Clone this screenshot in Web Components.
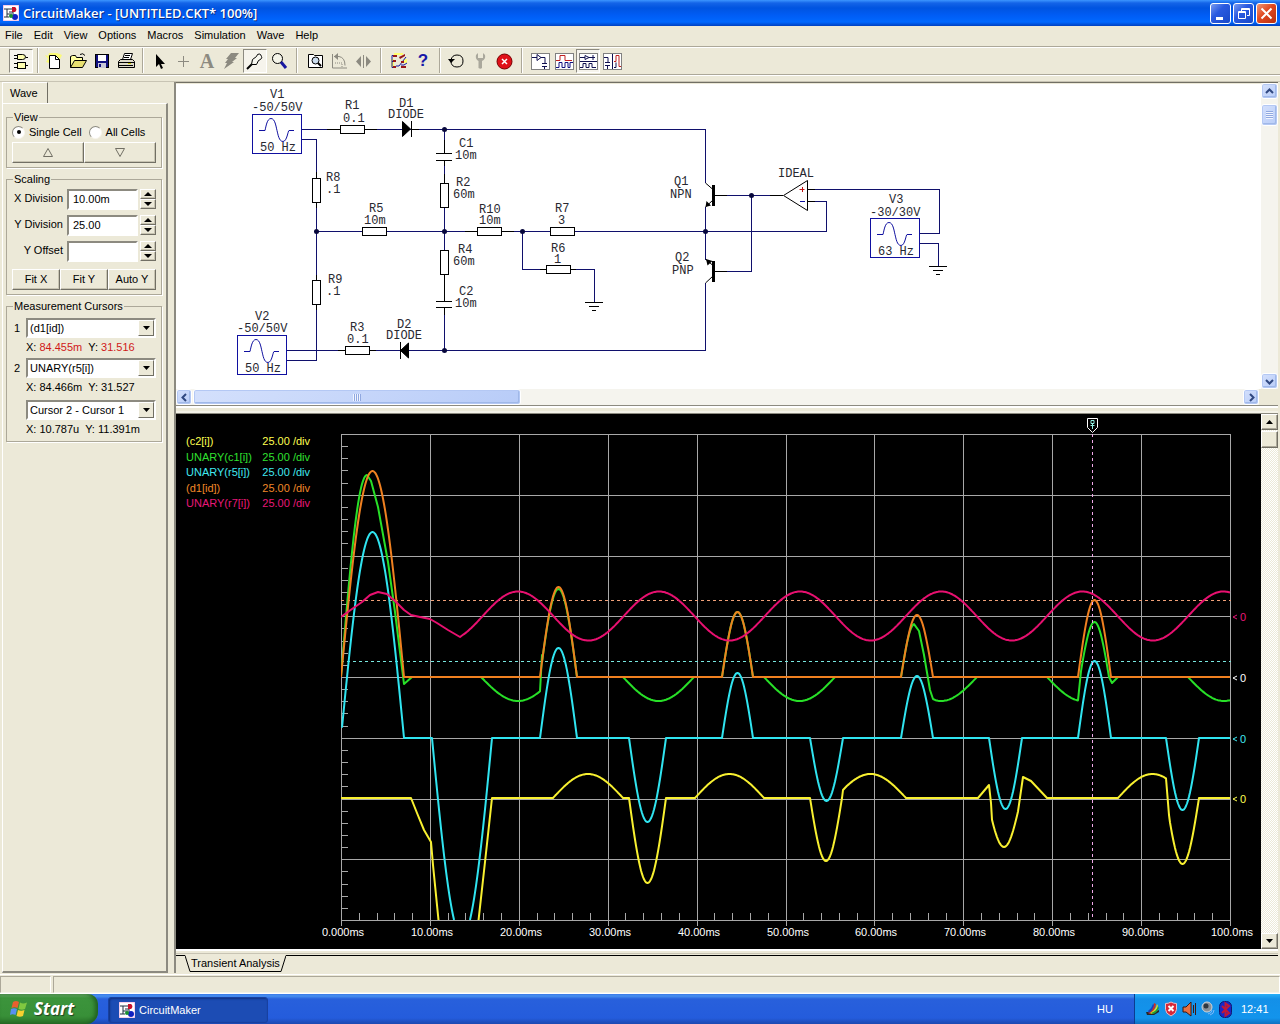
<!DOCTYPE html>
<html lang="en">
<head>
<meta charset="utf-8">
<title>CircuitMaker - [UNTITLED.CKT* 100%]</title>
<style>
html,body{margin:0;height:100%}
body{font:11px/13px "Liberation Sans",Arial,sans-serif;color:#000;background:#ece9d8;overflow:hidden}
</style>
</head>
<body>
<cm-app></cm-app>
<script>
const define=(name,html,after)=>customElements.define(name,class extends HTMLElement{
  constructor(){super();this.attachShadow({mode:'open'});}
  connectedCallback(){
    this.shadowRoot.innerHTML='<style>*{box-sizing:border-box}button,input,select{font:inherit;color:inherit;margin:0}</style>'+(typeof html==='function'?html(this):html);
    if(after)after(this);
  }
});
const LOGO='<rect width="16" height="16" fill="#fff" stroke="#e8a0d8"/><path d="M1 4h8M4 4v8M1 12h5M6 7h4v4M4 9h5" stroke="#203040" fill="none"/><path d="M9 2h3a3 3 0 0 1 0 5H9z" fill="#c8102c"/><circle cx="12" cy="12" r="3" fill="#1020c0"/><circle cx="8" cy="11" r="2" fill="#189030"/>';

/* ---- icons, drawn on a 20 x 20 grid ---- */
const ICONS={
gates:'<g fill="#ffffb0" stroke="#000"><path d="M6.500 3.500h5q3 0 3 2.500t-3 2.500h-5z"/><rect x="6.500" y="11.500" width="8" height="6"/></g><path d="M3 4.500h3M3 7.500h3M15 6.500h2M3 12.500h3M3 16.500h3M15 14.500h2" stroke="#000"/>',
new:'<path d="M5 2l-1 3-3-1 3 4-2 3 3 1v5h11V8l2-4-5-2z" fill="#ffff60" opacity=".8"/><path d="M5.500 4.500h6l4 4v9h-10z" fill="#fff" stroke="#000"/><path d="M11.500 4.500v4h4" fill="none" stroke="#000"/>',
open:'<path d="M2.500 16.500v-11l2-1h3l1 2h6v3" fill="#ffffa0" stroke="#000"/><path d="M2.500 16.500l4-7h12l-4 7z" fill="#e8e070" stroke="#000"/><path d="M12 3.500q3-2 5 1" stroke="#000" fill="none"/>',
save:'<rect x="3.500" y="3.500" width="13" height="13" fill="#101080" stroke="#000"/><rect x="6" y="4" width="8" height="6" fill="#fff"/><rect x="6" y="12" width="8" height="5" fill="#c8c8d8"/><rect x="7" y="13" width="2" height="3" fill="#101080"/>',
print:'<path d="M6.500 8.500l2-6h8l-2 6z" fill="#fff" stroke="#000"/><path d="M9 4.500h5M8 6.500h5" stroke="#000"/><path d="M2.500 10.500l2-2h12l2 2v6h-16z" fill="#ddd9c8" stroke="#000"/><path d="M2 11.500h16M3 14.500h14" stroke="#000"/><rect x="12" y="12" width="3" height="1" fill="#cc0"/>',
arrow:'<path d="M7 3v13l3-3 2 5 2-1-2-4h4z"/>',
plus:'<path d="M10.500 5v11M5 10.500h11" stroke="#8c8a80"/>',
flash:'<path d="M10 2h8l-4 5h2l-5 4h2L3 18l3-6H4l3-4H5z" fill="#8c8a80"/>',
probe:'<path d="M2 18l5-5" stroke="#000" stroke-width="2"/><path d="M6.500 13.500l1-5 4-3 1-2q2-1 3 0l1 2q1 1-1 3l-2 1-2 4z" fill="#f8f8f0" stroke="#000"/>',
zoom:'<circle cx="8.500" cy="7.500" r="5" fill="#f4f4e8" stroke="#000"/><path d="M12 11l5 6" stroke="#1818a0" stroke-width="3"/>',
fit:'<path d="M3.500 3.500h5l1 1h8v12h-14z" fill="#fff" stroke="#000"/><circle cx="10.500" cy="9.500" r="3.500" fill="#cde" stroke="#000"/><path d="M13 12l3 3" stroke="#000" stroke-width="2"/>',
rotate:'<path d="M3.500 3v14H18" fill="none" stroke="#8c8a80"/><path d="M6 12h7v4" fill="none" stroke="#8c8a80" stroke-dasharray="1 1"/><path d="M5 5.500h5q6 1 6 9" fill="none" stroke="#8c8a80"/><path d="M9 2v7L5 5.500z" fill="#8c8a80"/>',
mirror:'<path d="M8 5v11L3 10.500zM13 5v11l5-5.500z" fill="#8c8a80"/><path d="M10.500 4v13" stroke="#8c8a80"/>',
cut:'<path d="M5 2h9v2H5zM2 8h3v8H2zM15 8h3v4h-3z" fill="#ffff70"/><path d="M5 4.500h-2v12M3 10.500h4M3 16.500h4M7 15h3l7-9M12 14h3l3-2" stroke="#1818a0" fill="none"/><path d="M4 4h4v2H4zM4 9h3v2H4zM4 15h3v2H4zM10 6l6-3v2l-5 3zM12 10h3v2h-3zM12 15h5v2h-5z" fill="#981818"/>',
undo:'<path d="M5 10q0 6 6 6t6-6-6-6q-5 0-6 5" fill="none" stroke="#000"/><path d="M2 8h7l-4 4z"/>',
wrench:'<path d="M8.500 10v7q2 1.500 3.500 0v-7q4-2 3-6l-2-2v5h-5v-5l-2 2q-1 4 2.500 6z" fill="#aaa89c"/>',
stop:'<circle cx="10.500" cy="10.500" r="7.500" fill="#e01018" stroke="#700"/><path d="M8 8l5 5M13 8l-5 5" stroke="#fff" stroke-width="1.500"/>',
w1:'<rect x="1.500" y="2.500" width="18" height="16" fill="#fff" stroke="#808080"/><path d="M2 6.500h5v-3l4 3-4 3v-3M11 6.500h4v6M12 12.500h5M12 15.500h5M14.500 15v3" fill="none" stroke="#101050"/>',
w2:'<rect x="1.500" y="2.500" width="18" height="16" fill="#fff" stroke="#808080"/><path d="M2 9.500h4v-5h5v5h7" fill="none" stroke="#c02020"/><path d="M2 16.500h3v-5h3v5h3v-5h3v5h2v-5h3" fill="none" stroke="#101080"/>',
w3:'<rect x="1.500" y="2.500" width="18" height="16" fill="#fff" stroke="#808080"/><path d="M2 6.500h5v-2l4 2-4 2v-2M11 6.500h6M2 10.500h17M15 4v5M2 16.500h3v-4h3v4h3v-4h3v4h4" fill="none" stroke="#101050"/>',
w4:'<rect x="1.500" y="2.500" width="18" height="16" fill="#fff" stroke="#808080"/><path d="M10.500 3v15M2 6.500h4v5M3 11.500h5M3 14.500h5M5.500 14v4M12 16.500h2v-5" fill="none" stroke="#101050"/><path d="M12 10.500h2v-6h3v11h2" fill="none" stroke="#c02020"/>'
};

define('cm-tool',el=>{
  const n=el.getAttribute('icon');
  const inner=n==='text'?'<span>A</span>':n==='help'?'<b>?</b>':`<svg width="20" height="20" viewBox="0 0 20 20">${ICONS[n]}</svg>`;
  return `<style>:host{display:block;width:24px;height:24px}
button{width:100%;height:100%;padding:1px;border:1px solid transparent;background:none;display:flex;align-items:center;justify-content:center}
:host([pressed]) button{border-color:#8c8a80 #fff #fff #8c8a80;background:#f6f4ec}
span{font:bold 20px/20px "Liberation Serif",serif;color:#8c8a80}b{font:bold 17px/20px "Liberation Sans",sans-serif;color:#1818a8}</style>
<button type="button" aria-label="${n}">${inner}</button>`;});

define('cm-title-bar',`<style>:host{display:flex;align-items:center;height:26px;padding:0 3px;gap:4px;color:#fff;background:linear-gradient(#3c96ff 0,#1464e8 3px,#0054e0 8px,#005cf4 15px,#0068ff 22px,#0040c0 26px)}
h1{flex:1;margin:0;font:600 13px/18px "Open Sans","Noto Sans",sans-serif;text-shadow:1px 1px 0 #0a2a80}
div{display:flex;gap:2px}
button{width:21px;height:21px;padding:0;border:1px solid #fff;border-radius:3px;background:linear-gradient(135deg,#7a9cf0,#2a5ae0 40%,#1848c8);display:grid;place-items:center}
.x{background:linear-gradient(135deg,#f09878,#e04820 45%,#b83010)}svg{display:block}</style>
<svg width="16" height="16" viewBox="0 0 16 16">${LOGO}</svg><h1>CircuitMaker - [UNTITLED.CKT* 100%]</h1>
<div><button type="button" aria-label="Minimize"><svg width="15" height="15"><path d="M3 11h7v3H3z" fill="#fff"/></svg></button>
<button type="button" aria-label="Restore"><svg width="15" height="15" fill="none" stroke="#fff"><path d="M5.500 5V2.500h8v7H11M5 3.500h9M2.500 5.500h7v7h-7zM2 6.500h8"/></svg></button>
<button type="button" class="x" aria-label="Close"><svg width="15" height="15" stroke="#fff" stroke-width="2"><path d="M2.500 2.500l10 10M12.500 2.500l-10 10"/></svg></button></div>`);

define('cm-menu-bar',`<style>:host{display:flex;height:20px;gap:11px;padding:0 5px;align-items:flex-start}button{border:0;background:none;padding:0;line-height:18px}</style>
${['File','Edit','View','Options','Macros','Simulation','Wave','Help'].map(t=>`<button type="button">${t}</button>`).join('')}`);

define('cm-toolbar',()=>{
  const groups=[['*gates'],['new','open','save','print'],['arrow','plus','text','flash','*probe','zoom'],['fit','rotate','mirror'],['cut','help'],['undo','wrench','stop'],['w1','w2','*w3','w4']];
  const sep=['','s','s','l','l','s','l'];
  return `<style>:host{display:flex;height:29px;align-items:center;padding:0 9px;border-top:1px solid #aca899;border-bottom:1px solid #aca899;box-shadow:inset 0 1px #fff,0 1px #fff}
i{height:25px;width:2px;border-left:1px solid #aca899;border-right:1px solid #fff}.s{margin:0 3px 0 4px}.l{margin:0 5px}</style>`+
  groups.map((g,k)=>(sep[k]?`<i class="${sep[k]}"></i>`:'')+g.map(n=>n[0]==='*'?`<cm-tool icon="${n.slice(1)}" pressed></cm-tool>`:`<cm-tool icon="${n}"></cm-tool>`).join('')).join('');});

define('cm-group',el=>`<style>:host{display:block}fieldset{margin:0;min-width:0;padding:0 5px 4px;border:1px solid #aca899;box-shadow:1px 1px 0 #fff}
legend{margin:0 0 0 1px;padding:0 1px;line-height:13px}</style><fieldset><legend>${el.getAttribute('label')}</legend><slot></slot></fieldset>`);

define('cm-sidebar',()=>{
  const spin=(id,label,val)=>`<div class="row"><label for="${id}">${label}</label><input type="text" id="${id}" value="${val}"><span class="spin"><button type="button" aria-label="${label} up"><svg width="8" height="4"><path d="M0 4l4-4 4 4z"/></svg></button><button type="button" aria-label="${label} down"><svg width="8" height="4"><path d="M0 0h8l-4 4z"/></svg></button></span></div>`;
  const sel=(id,n,val)=>`<div class="pick"><label for="${id}">${n}</label><span class="box"><select id="${id}" aria-label="${val}"><option>${val}</option></select><i><svg width="7" height="4"><path d="M0 0h7l-3.500 4z"/></svg></i></span></div>`;
  return `<style>:host{display:flex;flex-direction:column;width:168px;padding-left:2px}
button{padding:0;border:1px solid;border-color:#fff #716f64 #716f64 #fff;background:#ece9d8;box-shadow:inset -1px -1px #c8c4b2;display:grid;place-items:center}
.tab{align-self:flex-start;width:46px;height:21px;padding:0 0 0 7px;border:1px solid #fff;border-right:1px solid #716f64;border-bottom:0;line-height:19px;background:none;box-shadow:none;display:block;text-align:left}
.panel{flex:1;display:flex;flex-direction:column;gap:5px;padding:7px 4px 0 3px;border:1px solid #fff;border-right:2px solid #8c8a80;border-bottom:2px solid #8c8a80}
.radios{display:flex;gap:7px;height:18px;align-items:center;padding-bottom:2px}.radios label{display:flex;align-items:center;gap:4px}
input[type=radio]{appearance:none;width:13px;height:13px;border:1px solid;border-color:#8c8a80 #f8f6ee #f8f6ee #8c8a80;border-radius:50%;background:#fff;display:grid;place-items:center}
input[type=radio]:checked::after{content:"";width:4px;height:4px;border-radius:50%;background:#000}
.btns{display:flex}.btns button{flex:1;height:21px}.fits{margin-top:5px}
.row{display:flex;align-items:center;height:26px;gap:2px}.row label{flex:1;text-align:right;white-space:nowrap;padding-right:2px;padding-bottom:2px}
.row input{width:71px;height:21px;padding:0 4px;border:2px solid;border-color:#8c8a80 #fff #fff #8c8a80;background:#fff;border-radius:0}
.spin{display:flex;flex-direction:column;width:16px}.spin button{height:10px}
.picks{padding-top:5px}
.pick{display:flex;height:20px;gap:6px;align-items:center}.pick label{width:8px;text-align:right}.box{flex:1;display:grid}
select{grid-area:1/1;appearance:none;width:100%;height:20px;padding:0 18px 0 2px;border:2px solid;border-color:#8c8a80 #fff #fff #8c8a80;border-radius:0;background:#fff}
.box i{grid-area:1/1;justify-self:end;align-self:center;margin-right:2px;width:16px;height:16px;background:#ece9d8;border:1px solid;border-color:#fff #716f64 #716f64 #fff;display:grid;place-items:center;pointer-events:none}
.val{height:20px;line-height:19px;padding-left:14px;white-space:pre}.val b{font-weight:400;color:#d01818}.gap{height:22px}.last{height:17px}</style>
<button type="button" class="tab">Wave</button>
<div class="panel">
<cm-group label="View"><div class="radios"><label><input type="radio" name="v" checked>Single Cell</label><label><input type="radio" name="v">All Cells</label></div>
<div class="btns"><button type="button" aria-label="Previous"><svg width="10" height="9" fill="none" stroke="#716f64"><path d="M.5 8.500h9l-4.500-8z"/></svg></button><button type="button" aria-label="Next"><svg width="10" height="9" fill="none" stroke="#716f64"><path d="M.5.5h9l-4.500 8z"/></svg></button></div></cm-group>
<cm-group label="Scaling">${spin('xd','X Division','10.00m')}${spin('yd','Y Division','25.00')}${spin('yo','Y Offset','')}
<div class="btns fits"><button type="button">Fit X</button><button type="button">Fit Y</button><button type="button">Auto Y</button></div></cm-group>
<cm-group label="Measurement Cursors"><div class="picks">${sel('c1','1','(d1[id])')}<div class="val">X: <b>84.455m</b>  Y: <b>31.516</b></div>${sel('c2','2','UNARY(r5[i])')}<div class="val gap">X: 84.466m  Y: 31.527</div>${sel('c3','','Cursor 2 - Cursor 1')}<div class="val last">X: 10.787u  Y: 11.391m</div></div></cm-group>
</div>`;});

define('cm-scroll',el=>{
  const v=el.hasAttribute('vertical'),len=el.getAttribute('thumb'),cl=el.hasAttribute('classic');
  const ch=d=>cl?`<svg width="7" height="4"><path d="${d?'M0 0h7l-3.500 4z':'M0 4h7l-3.500-4z'}"/></svg>`:
   `<svg width="9" height="9" viewBox="0 0 9 9" fill="none" stroke="#304880" stroke-width="2"><path d="${v?(d?'M1 3l3.500 3.500 3.500-3.500':'M1 6l3.500-3.500 3.500 3.500'):(d?'M3 1l3.500 3.500-3.500 3.500':'M6 1l-3.500 3.500 3.500 3.500')}"/></svg>`;
  const skin=cl?'border:1px solid;border-color:#fff #716f64 #716f64 #fff;background:#ece9d8;box-shadow:inset -1px -1px #aca899':'border:1px solid #fff;border-radius:3px;background:linear-gradient(135deg,#d4e0fc,#b8ccf8);box-shadow:inset 0 0 0 1px #b4c8f4,inset -1px -1px 0 1px #a0b8e8';
  return `<style>:host{display:flex;flex-direction:${v?'column':'row'};background:${cl?'repeating-conic-gradient(#fff 0 25%,#ece9d8 0 50%) 0 0/2px 2px':'#f5f4ee'}}
button{flex:none;${v?'width:100%;height:16px':'height:100%;width:16px'};padding:0;${skin};display:grid;place-items:center}
.t{flex:none;${v?`height:${len};margin-top:${cl?1:5}px`:`width:${len};margin-left:1px`};${skin};display:grid;place-items:center}
.g{${v?'width:7px;height:8px;background:repeating-linear-gradient(#90a8e0 0 1px,#f0f4ff 1px 2px)':'width:8px;height:7px;background:repeating-linear-gradient(90deg,#f0f4ff 0 1px,#90a8e0 1px 2px)'}}
.s{flex:1}</style><button type="button" aria-label="Back">${ch(0)}</button><div class="t">${cl?'':'<div class="g"></div>'}</div><div class="s"></div><button type="button" aria-label="Forward">${ch(1)}</button>`;});

define('cm-schematic',()=>{
  const src=(x,y)=>`<rect x="${x+.5}" y="${y+.5}" width="49" height="39"/><path d="M${x+7} ${y+16.500}h6c1-4 2-12 6-12s5 8 6 12 2 11 6 11 5-11 6-11h5" shape-rendering="auto"/>`;
  const rh=(x,y)=>`<rect x="${x+.5}" y="${y-3.500}" width="24" height="8"/>`, rv=(x,y)=>`<rect x="${x-3.500}" y="${y+.5}" width="8" height="24"/>`;
  const labels=[[270,98,'V1'],[252,111,'-50/50V'],[260,151,'50 Hz'],[345,109,'R1'],[343,122,'0.1'],[399,107,'D1'],[388,118,'DIODE'],[459,147,'C1'],[455,159,'10m'],[456,186,'R2'],[453,198,'60m'],[326,181,'R8'],[326,193,'.1'],[369,212,'R5'],[364,224,'10m'],[479,213,'R10'],[479,224,'10m'],[555,212,'R7'],[558,224,'3'],[551,252,'R6'],[554,263,'1'],[458,253,'R4'],[453,265,'60m'],[328,283,'R9'],[326,295,'.1'],[459,295,'C2'],[455,307,'10m'],[255,320,'V2'],[237,332,'-50/50V'],[245,372,'50 Hz'],[350,331,'R3'],[347,343,'0.1'],[397,328,'D2'],[386,339,'DIODE'],[674,185,'Q1'],[670,198,'NPN'],[675,261,'Q2'],[672,274,'PNP'],[778,177,'IDEAL'],[889,203,'V3'],[870,216,'-30/30V'],[878,255,'63 Hz']];
  return `<style>:host{display:block;background:#fff;overflow:hidden}svg{display:block}text{font:12px "Liberation Mono",monospace;fill:#282830}</style>
<svg width="1085" height="305" viewBox="176 84 1085 305"><g fill="none" stroke="#10106c" shape-rendering="crispEdges">
<path d="M302 129.500H705.500V183M302 139.500h14.500V360.500H287M287 350.500H705.500V283M444.500 129v24M444.500 160v141M444.500 307v43M316 231.500H826.500V201.500H808M522.500 231v38.500H594.500V302M705.500 207V260M715 195.500h68M751.500 195v76.500H715M808 189.500H939.500V233.500H920M920 243.500h18.500V266"/>
<g stroke="#1010a0">${src(252,114)}${src(237,335)}${src(870,218)}</g>
<g stroke="#000"><path d="M327 129.500h13M365 129.500h12M411 129.500h8M444.500 140v13M444.500 160v6M444.500 174v34M444.500 275v26M444.500 307v8M316.500 172v36M316.500 275v35M377 231.500h-13M465 231.500h12M502 231.500h12M540 269.500h36M338 350.500h38M715 195.500h12M715 271.500h12M770 195.500h13M808 189.500h7M808 201.500h7"/>
<path d="M436 153.500h16M436 160.500h16M436 301.500h16M436 307.500h16M585 302.500h18M589 306.500h10M592 310.500h4M929 266.500h18M933 270.500h10M936 274.500h4M411.500 121v16M400.500 342v17"/>
<g fill="#fff">${rh(340,129)+rh(345,350)+rh(362,231)+rh(477,231)+rh(550,231)+rh(546,269)+rv(316,178)+rv(316,280)+rv(444,183)+rv(444,250)}</g></g></g>
<g stroke="#000" fill="#000"><path d="M402.500 121.500v15l8-7.500zM408.500 343v15l-8-7.500z"/><path d="M705.500 183l7.500 6.500M713 200l-7.500 7M705.500 259l7.500 6.500M713 276l-7.500 7" fill="none"/><path d="M705.500 207l1-6 4.500 4.500zM706 259l1.500 6.500 5-4.500z" stroke="none"/><path d="M712 185h3v21h-3zM712 261h3v21h-3z" stroke="none"/><path d="M783.500 195.500l24-15v30z" fill="#fff"/></g>
<path d="M799.500 189.500h5M802.500 187v5" stroke="#c01010"/><path d="M800 201.500h5" stroke="#1010a0"/>
<g fill="#08083c">${[[444,129],[316,231],[444,231],[522,231],[705,231],[751,195],[444,350]].map(p=>`<circle cx="${p[0]+.5}" cy="${p[1]+.5}" r="2.500"/>`).join('')}</g>
${labels.map(l=>`<text x="${l[0]}" y="${l[1]}">${l[2]}</text>`).join('')}</svg>`;});

/* ---- oscilloscope traces ---- */
const lobe=(x0,x1,base,amp,a=x0,b=x1)=>{const p=[];for(let x=a;x<b;x+=1)p.push([x,base-amp*Math.sin(Math.PI*(x-x0)/(x1-x0))]);p.push([b,base-amp*Math.sin(Math.PI*(b-x0)/(x1-x0))]);return p;};
const line=p=>'M'+p.map(q=>q[0].toFixed(1)+' '+q[1].toFixed(1)).join('L');
const B=677,C=738,Y=798;
const orange=[...lobe(341,404,B,206),...lobe(540,577,B,90),...lobe(722,753,B,65),...lobe(901,933,B,62),...lobe(1078,1111,B,77),[1230,B]];
const cyan=[...lobe(341,404,C,206,342,404),...lobe(432,492,C,-199),...lobe(540,577,C,90),...lobe(629,666,C,-84),...lobe(722,753,C,65),...lobe(810,843,C,-63),...lobe(901,933,C,62),...lobe(989,1022,C,-71),...lobe(1078,1111,C,77),...lobe(1166,1199,C,-72),[1230,C]];
const green=[...lobe(341,393,B,202,341,367),[371,481],[378,507],[388,562],[395,612],[404,684],[412,B],...lobe(481,555,B,-24,481,540),[542,655],...lobe(540,577,B,88,542,577),...lobe(623,694,B,-24),...lobe(722,753,B,65),...lobe(764,835,B,-24),...lobe(901,928,B,53,901,914),[919,631],[924,655],[930,690],[933,699],...lobe(905,977,B,-24,936,977),...lobe(1047,1119,B,-24,1047,1078),...lobe(1080,1109,B,55,1081,1109),[1112,683],[1118,B],...lobe(1188,1260,B,-24,1188,1230)];
const yellow=[[341,Y],[411,Y],[417,813],[424,830],[431,842],[433,865],[439,925],[478,925],[485,862],[492,Y],...lobe(553,623,Y,24),[629,Y],...lobe(629,666,Y,-85),...lobe(695,764,Y,24),[810,Y],...lobe(810,842,Y,-63,810,842),[843,790],...lobe(835,906,Y,24,847,906),[978,Y],[989,785],[991,803],...lobe(987,1021,Y,-49,992,1018),[1023,777],[1031,781],[1047,Y],...lobe(1118,1187,Y,24,1118,1166),[1169,815],...lobe(1166,1199,Y,-66,1170,1199),[1230,Y]];
const pink=[[341,617],[352,609],[362,602],[370,595],[378,592],[387,594],[396,602],[404,610],[411,615],[420,617],[430,619],[437,623],[448,630],[460,637]];
for(let x=461;x<=1230;x++)pink.push([x,616-24.500*Math.sin(2*Math.PI*(x-482.700)/141.100)]);

define('cm-scope',()=>{
  let grid='',ticks='';
  for(let i=0;i<=10;i++)grid+=`M${Math.round(341+88.900*i)+.5} 434V926`;
  for(let i=0;i<=8;i++)grid+=`M341 ${Math.round(434+60.750*i)+.5}H1231`;
  for(let i=0;i<40;i++)ticks+=`M341 ${Math.round(434+12.150*i)+.5}h7`;
  for(let i=0;i<50;i++)ticks+=`M${Math.round(341+17.780*i)+.5} 920v-7`;
  const leg=[['(c2[i])','#ffff50'],['UNARY(c1[i])','#30e030'],['UNARY(r5[i])','#40e8f0'],['(d1[id])','#f08828'],['UNARY(r7[i])','#e81878']];
  const ax=['0.000ms','10.00ms','20.00ms','30.00ms','40.00ms','50.00ms','60.00ms','70.00ms','80.00ms','90.00ms','100.0ms'];
  return `<style>:host{display:flex;background:#000}.legend{width:146px;padding:20px 0 0 10px;display:flex;flex-direction:column}
.legend div{display:flex;justify-content:space-between;padding-right:12px;height:15px;line-height:15px}.legend div:nth-child(odd){height:16px}
svg{flex:1;min-width:0;height:auto;display:block}text{font:11px "Liberation Sans",sans-serif}cm-scroll{width:17px}</style>
<div class="legend">${leg.map(l=>`<div style="color:${l[1]}"><span>${l[0]}</span><span>25.00 /div</span></div>`).join('')}</div>
<svg viewBox="322 414 939 535"><defs><clipPath id="c"><rect x="341" y="434" width="890" height="486"/></clipPath></defs>
<path d="${grid+ticks}" stroke="#a8a8a8" fill="none" shape-rendering="crispEdges"/>
<g stroke-dasharray="3 3" shape-rendering="crispEdges"><path d="M341 600.500h890" stroke="#f0a078"/><path d="M341 661.500h890" stroke="#78e8e0"/></g>
<g clip-path="url(#c)" fill="none" stroke-width="2" stroke-linejoin="round"><path d="${line(yellow)}" stroke="#f8f030"/><path d="${line(green)}" stroke="#28e028"/><path d="${line(cyan)}" stroke="#30e4f0"/><path d="${line(orange)}" stroke="#f08020"/><path d="${line(pink)}" stroke="#e81070"/></g>
<path d="M1092.500 434V920" stroke="#f0a8e8" stroke-dasharray="3 3" shape-rendering="crispEdges"/>
<path d="M1087.500 418.500h10v9l-5 5-5-5z" fill="#000" stroke="#fff"/><path d="M1091 420.500h3v3h-3zM1090.500 425.500h4M1092.500 424v5" stroke="#90f0e0" fill="none"/>
<g fill="#fff">${ax.map((t,i)=>`<text x="${Math.round(343+88.900*i)}" y="936" text-anchor="middle">${t}</text>`).join('')}</g>
${[[616,'#e81878'],[677,'#fff'],[738,'#40e8f0'],[798,'#ffff50']].map(z=>`<path d="M1237 ${z[0]-1}l-4 2 4 2" fill="none" stroke="${z[1]}"/><text x="1240" y="${z[0]+5}" fill="${z[1]}">0</text>`).join('')}
</svg><cm-scroll vertical classic thumb="17px"></cm-scroll>`;});

define('cm-tabs',`<style>:host{display:flex;height:18px;margin-top:1px}i{border-top:1px solid #000;width:9px}i:last-child{flex:1}
button{padding:0;border:0;background:none;display:flex;height:17px}svg{flex:none}span{border-bottom:1px solid #000;line-height:16px}</style>
<i></i><button type="button"><svg width="6" height="17"><path d="M0 .5l5 16h1" fill="none" stroke="#000"/></svg><span>Transient Analysis</span><svg width="6" height="17"><path d="M0 16.500h1l5-16" fill="none" stroke="#000"/></svg></button><i></i>`);

define('cm-workspace',`<style>:host{display:flex;flex-direction:column;min-width:0;border-left:2px solid #8c8a80;padding-right:2px}
.top{display:flex;border-top:1px solid #716f64}.top cm-schematic{flex:1;height:305px;margin-top:1px}.top cm-scroll{width:17px}
.h{display:flex;height:16px}.h cm-scroll{flex:1;margin-right:19px}
.split{height:9px;border-top:1px solid #8c8a80;border-bottom:1px solid #8c8a80;box-shadow:inset 0 2px #fff,inset 0 -2px #f4f2e8}
.line{height:5px;box-shadow:inset 0 2px #fff;border-bottom:1px solid #c8c4b4}</style>
<div class="top"><cm-schematic></cm-schematic><cm-scroll vertical thumb="22px"></cm-scroll></div>
<div class="h"><cm-scroll thumb="328px"></cm-scroll></div><div class="split"></div><cm-scope></cm-scope><div class="line"></div><cm-tabs></cm-tabs>`);

define('cm-status',`<style>:host{display:flex;height:18px;gap:2px;border-bottom:1px solid #fff}div{width:51px;border:1px solid;border-color:#aca899 #fff #f4f2e8 #aca899}div:last-child{flex:1}</style><div></div><div></div>`);

define('cm-taskbar',`<style>:host{display:flex;height:30px;color:#fff;background:linear-gradient(#3878e8 0,#4890f0 2px,#2860dc 5px,#245cdc 24px,#1c48b0 30px)}
.start{width:98px;padding:0 0 0 10px;border:0;border-radius:0 10px 12px 0;background:linear-gradient(#70b470 0,#3c943c 4px,#389038 22px,#287028 30px);box-shadow:inset -3px 0 4px #206020;display:flex;align-items:center;gap:6px;font:italic bold 17px/28px "Open Sans","Liberation Sans",sans-serif;text-shadow:1px 1px 1px #204020}
.task{width:160px;height:26px;margin:3px 0 0 10px;padding:0 0 0 10px;border:1px solid #1840a0;border-radius:3px;background:#1c4cb4;box-shadow:inset 1px 1px 2px #103080;display:flex;align-items:center;gap:4px}
.sp{flex:1}.hu{align-self:center;margin-right:21px}.tray{width:146px;padding-left:10px;display:flex;align-items:center;gap:4px;background:linear-gradient(#28b0f8 0,#1490e8 5px,#1294ec 24px,#1070c0 30px);border-left:1px solid #0c3c90}
time{margin-left:5px}svg{flex:none}</style>
<button type="button" class="start"><svg width="18" height="18" viewBox="0 0 18 18"><path d="M3 2q3-2 6 0L7.500 8q-3-1.500-6 0z" fill="#e86030"/><path d="M10 2.500q3 2 7 0L15 9q-3 1.500-6.500 0z" fill="#80c840"/><path d="M1 9q3-1.500 6 0l-1.500 6q-3-1.500-5.500 0z" fill="#5890f0"/><path d="M8 10q3 1.500 6.500 0L13 16q-3 1.500-6.500 0z" fill="#f8d030"/></svg>Start</button>
<button type="button" class="task"><svg width="16" height="16" viewBox="0 0 16 16">${LOGO}</svg>CircuitMaker</button>
<div class="sp"></div><span class="hu">HU</span>
<div class="tray"><svg width="15" height="16" viewBox="0 0 15 16"><path d="M1 11h8l5-2v2l-5 3H2z" fill="#282828"/><path d="M3 12q5-3 6-10l2 1q-1 7-6 10z" fill="#d03020"/><path d="M5 12q6-3 7-9l1 2q-1 6-6 8z" fill="#e8e020"/><path d="M6 12q6-2 7-7l1 2q-2 5-6 6z" fill="#20a040"/><path d="M3 10q4-3 5-7l1 1q-1 5-5 8z" fill="#1840c0"/></svg>
<svg width="14" height="16" viewBox="0 0 14 16"><path d="M1.500 2.500q3 0 5.500-1.500 2.500 1.500 5.500 1.500v6q0 4-5.500 6.500-5.500-2.500-5.500-6.500z" fill="#d82838" stroke="#e8c0c8"/><path d="M4.500 5l5 5M9.500 5l-5 5" stroke="#fff" stroke-width="2"/></svg>
<svg width="15" height="16" viewBox="0 0 15 16"><path d="M1 6h3l5-5v14l-5-4H1z" fill="#e87040" stroke="#381810"/><path d="M11.500 4v8M13.500 2v12" stroke="#401810"/></svg>
<svg width="14" height="16" viewBox="0 0 14 16"><circle cx="6" cy="6" r="5" fill="#889098" stroke="#d0d4d8"/><circle cx="5" cy="5" r="2.500" fill="#303840"/><path d="M9 14q4-1 4-5M7 13q4-1 4-4" stroke="#80b8f8" fill="none"/></svg>
<svg width="13" height="17" viewBox="0 0 13 17"><rect x=".5" y=".5" width="12" height="16" rx="5" fill="#1828c8" stroke="#101870"/><path d="M3 5l7 7-3.500 2.500v-12L10 5l-7 7" stroke="#c01838" stroke-width="2" fill="none"/></svg>
<time>12:41</time></div>`);

define('cm-app',`<style>:host{display:flex;flex-direction:column;min-height:100vh;background:#ece9d8}.body{flex:1;display:flex;gap:6px;margin-top:6px;border-top:1px solid #c8c4b4;padding-bottom:1px;margin-bottom:1px;border-bottom:1px solid #fff}cm-workspace{flex:1}</style>
<cm-title-bar></cm-title-bar><cm-menu-bar></cm-menu-bar><cm-toolbar></cm-toolbar>
<div class="body"><cm-sidebar></cm-sidebar><cm-workspace></cm-workspace></div><cm-status></cm-status><cm-taskbar></cm-taskbar>`);
</script>
</body>
</html>
